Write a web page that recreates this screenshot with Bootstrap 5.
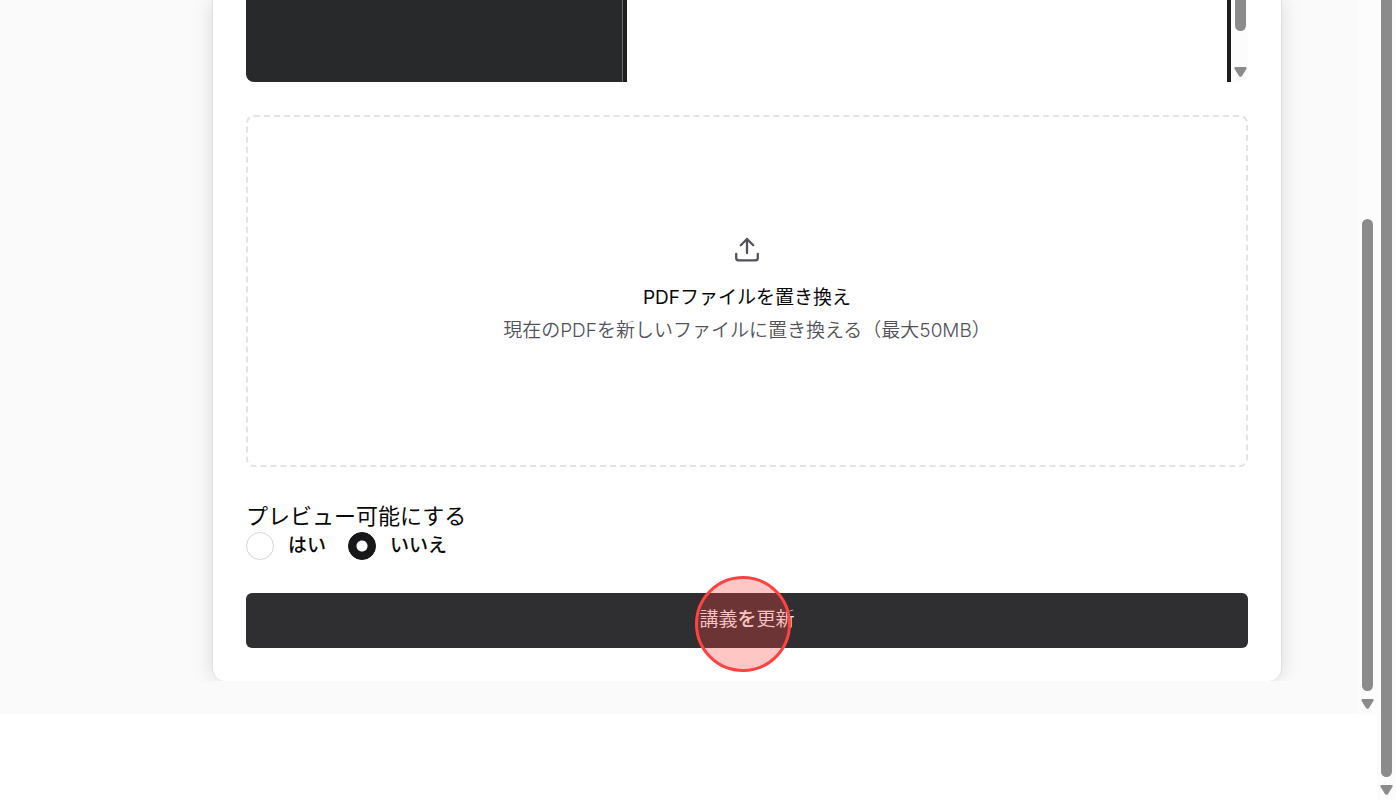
<!DOCTYPE html>
<html lang="ja">
<head>
<meta charset="utf-8">
<meta name="viewport" content="width=device-width, initial-scale=1">
<title>講義を更新</title>
<link rel="stylesheet" href="https://cdn.jsdelivr.net/npm/bootstrap@5.3.0/dist/css/bootstrap.min.css">
<style>
  body { font-family: Inter, "Noto Sans CJK JP", sans-serif; font-size: 19px; line-height: 28px; color: #09090b; background: #fff; }
  .workspace { background: #fafafa; padding-bottom: 33px; }
  .form-clip { padding: 0 76px 0 212px; }
  .lecture-card { border: solid #e0e0e2; border-width: 0 1px; border-radius: 0 0 13px 13px; box-shadow: 0 0 20px rgba(0,0,0,.13); padding: 0 33px 33px; }
  .pdf-viewer { height: 82px; margin-bottom: 33px; border-radius: 0 0 8px 8px; }
  .thumbs { width: 38%; background: #28292a; border-right: 4px solid #1d1d1e; box-shadow: inset -1px 0 #6b6b6b; }
  .page-view { border-right: 4px solid #1d1d1e; }
  .bar-track { width: 19px; background: #fcfcfc; padding-bottom: 5px; }
  .bar-thumb { width: 11px; background: #8b8b8b; }
  .bar-arrow { width: 13px; height: 10px; margin-top: 8px; }
  .bar-track.viewer-bar { width: 17px; padding: 0 0 5px 2px; }
  .viewer-bar .bar-thumb { height: 31px; }
  .viewer-bar .bar-arrow { margin-top: auto; }
  .panel-bar .bar-thumb { margin-top: 219px; }
  .dropzone { height: 352px; border: 2px dashed #e4e4e7; border-radius: 8px; cursor: pointer; }
  .dropzone .hint { color: #52525b; line-height: 33px; font-weight: 350; }
  .dropzone svg { margin-bottom: 18px; }
  .dropzone .zone-title { line-height: 33px; }
  .preview-set { margin-top: 33px; }
  .preview-set legend { font-size: 22px; line-height: 32px; }
  .choices { gap: 22px; }
  .choice { gap: 14px; font-weight: 500; }
  .choice .form-check-input { width: 28px; height: 28px; margin: 0; border-color: #d4d4d8; box-shadow: none; }
  .choice .form-check-input:checked { background: #18181b radial-gradient(circle, #fff 5px, #18181b 6px); border-color: #18181b; }
  .btn-update { height: 55px; margin-top: 33px; background: #2f2f31; color: #fafafa; font-size: 19px; font-weight: 350; border: 0; border-radius: 6px; }
  .btn-update:hover { background: #2f2f31; color: #fafafa; }
  .click-ring { left: 50%; top: 50%; width: 96px; height: 96px; margin: -45px 0 0 -52px; border: 3px solid #ff4242; background: rgba(255,66,66,.3); pointer-events: none; }
</style>
</head>
<body>
<div class="d-flex vh-100 overflow-hidden">
  <div class="flex-grow-1">
    <div class="d-flex">
      <main class="workspace flex-grow-1">
        <div class="form-clip overflow-hidden">
          <form class="lecture-card bg-white">
            <div class="pdf-viewer d-flex overflow-hidden">
              <div class="thumbs"></div>
              <div class="page-view flex-grow-1"></div>
              <div class="bar-track viewer-bar d-flex flex-column align-items-center">
                <div class="bar-thumb rounded-bottom-5"></div>
                <svg class="bar-arrow" viewBox="0 0 13 10" aria-hidden="true"><path d="M1.500 0h10q1.500.2 1 1.800L8 9q-1.500 1.700-3 0L.5 1.800Q0 .2 1.500 0Z" fill="#8b8b8b"/></svg>
              </div>
            </div>
            <label class="dropzone d-flex flex-column align-items-center justify-content-center text-center" for="pdf">
              <svg width="28" height="28" viewBox="0 0 28 28" fill="none" stroke="#52525b" stroke-width="2.300" stroke-linecap="round" stroke-linejoin="round" aria-hidden="true"><path d="M14 18V4M7.800 10.200 14 4l6.200 6.200M3.200 19v4q0 2.300 2.300 2.300h17q2.300 0 2.300-2.300V19"/></svg>
              <span class="zone-title">PDFファイルを置き換え</span>
              <span class="hint">現在のPDFを新しいファイルに置き換える（最大50MB）</span>
            </label>
            <input class="visually-hidden" type="file" id="pdf" accept="application/pdf">
            <fieldset class="preview-set">
              <legend class="mb-0">プレビュー可能にする</legend>
              <div class="choices d-flex">
                <div class="choice d-flex align-items-center">
                  <input class="form-check-input" type="radio" name="preview" id="yes">
                  <label for="yes">はい</label>
                </div>
                <div class="choice d-flex align-items-center">
                  <input class="form-check-input" type="radio" name="preview" id="no" checked>
                  <label for="no">いいえ</label>
                </div>
              </div>
            </fieldset>
            <button type="button" class="btn btn-update w-100 position-relative">講義<span class="fw-medium">を</span>更新<span class="click-ring position-absolute rounded-circle"></span></button>
          </form>
        </div>
      </main>
      <div class="bar-track panel-bar d-flex flex-column align-items-center">
        <div class="bar-thumb flex-grow-1 rounded-pill"></div>
        <svg class="bar-arrow" viewBox="0 0 13 10" aria-hidden="true"><path d="M1.500 0h10q1.500.2 1 1.800L8 9q-1.500 1.700-3 0L.5 1.800Q0 .2 1.500 0Z" fill="#8b8b8b"/></svg>
      </div>
    </div>
  </div>
  <div class="bar-track d-flex flex-column align-items-center">
    <div class="bar-thumb flex-grow-1 rounded-bottom-5"></div>
    <svg class="bar-arrow" viewBox="0 0 13 10" aria-hidden="true"><path d="M1.500 0h10q1.500.2 1 1.800L8 9q-1.500 1.700-3 0L.5 1.800Q0 .2 1.500 0Z" fill="#8b8b8b"/></svg>
  </div>
</div>
<script src="https://cdn.jsdelivr.net/npm/bootstrap@5.3.0/dist/js/bootstrap.bundle.min.js"></script>
</body>
</html>
